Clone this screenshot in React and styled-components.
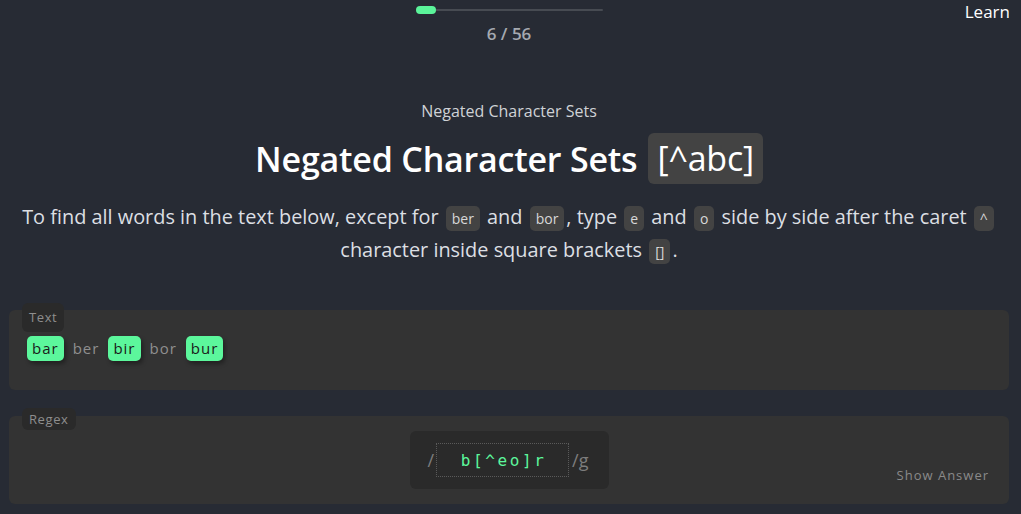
import React from 'react';
import styled, { createGlobalStyle } from 'styled-components';

const GlobalStyle = createGlobalStyle`
  html, body {
    margin: 0;
    padding: 0;
    background: #272b34;
    font-family: "Open Sans", "Noto Sans", sans-serif;
    color: #e6e6e6;
  }
`;

const Page = styled.div`
  width: 1000px;
  margin-left: 9px;
  height: 514px;
  overflow: hidden;
`;

const Header = styled.header`
  position: relative;
  display: flex;
  flex-direction: column;
  align-items: center;
  padding-top: 7px;
`;

const Track = styled.div`
  width: 187px;
  height: 2px;
  background: #474b52;
  border-radius: 2px;
  position: relative;
  margin-top: 2px;
`;

const Fill = styled.div`
  position: absolute;
  left: 0;
  top: -3px;
  height: 8px;
  border-radius: 4px;
  background: #5bf49a;
`;

const Counter = styled.div`
  margin-top: 11px;
  font-size: 17px;
  font-weight: 600;
  color: #a5a9b0;
`;

const LearnLink = styled.a`
  position: absolute;
  right: -1px;
  top: 0;
  font-size: 17px;
  color: #ffffff;
  text-decoration: none;
`;

const Intro = styled.section`
  display: flex;
  flex-direction: column;
  align-items: center;
  text-align: center;
  margin-top: 55px;
`;

const Subtitle = styled.div`
  font-size: 16px;
  color: #cfd2d6;
`;

const Title = styled.h1`
  margin: 11px 0 0;
  font-size: 34px;
  font-weight: 600;
  color: #ffffff;
  display: flex;
  align-items: center;
  gap: 11px;
  letter-spacing: -0.2px;
`;

const TitleCode = styled.span`
  background: #434343;
  border-radius: 6px;
  padding: 0 9px;
  font-weight: 400;
  line-height: 51px;
`;

const Description = styled.p`
  margin: 17px 0 0;
  font-size: 19.9px;
  line-height: 31px;
  color: #dcdfe3;
  max-width: 1000px;
`;

const Code = styled.code`
  font-family: "Open Sans", sans-serif;
  font-size: 14px;
  background: #434343;
  color: #d8d8d8;
  border-radius: 5px;
  padding: 3px 6px;
  margin: 0 2px;
`;

const Panel = styled.section`
  position: relative;
  background: #333333;
  border-radius: 6px;
  margin-top: ${p => p.$gap}px;
  height: ${p => p.$height}px;
  box-sizing: border-box;
  padding: ${p => p.$pad};
`;

const PanelLabel = styled.span`
  position: absolute;
  left: 13px;
  top: ${p => p.$top}px;
  height: ${p => p.$height}px;
  box-sizing: border-box;
  background: #2a2a2a;
  color: #8e8e8e;
  font-size: 13px;
  line-height: 18px;
  letter-spacing: 0.6px;
  padding: ${p => p.$padTop}px 7px 0;
  border-radius: 6px;
`;

const Words = styled.div`
  display: flex;
  align-items: center;
  gap: 8px;
  font-size: 15px;
  letter-spacing: 1px;
`;

const Word = styled.span`
  padding: ${p => (p.$match ? '2px 5px 3px' : '2px 1px 3px')};
  border-radius: 5px;
  color: ${p => (p.$match ? '#1a1a1a' : '#8f8f8f')};
  background: ${p => (p.$match ? '#5cf79c' : 'transparent')};
  box-shadow: ${p => (p.$match ? '2px 3px 4px rgba(0,0,0,0.35)' : 'none')};
`;

const RegexBox = styled.div`
  width: 199px;
  height: 58px;
  margin: 0 auto;
  background: #2a2a2a;
  border-radius: 6px;
  display: flex;
  align-items: center;
  box-sizing: border-box;
  padding: 0 14px 0 18px;
  font-size: 18px;
  color: #7d7d7d;
`;

const RegexInput = styled.div`
  width: 133px;
  height: 34px;
  border: 1px dotted #5a5a5a;
  margin: 0 3px 0 2px;
  box-sizing: border-box;
  display: flex;
  align-items: center;
  justify-content: center;
  font-family: "DejaVu Sans Mono", monospace;
  font-size: 16px;
  letter-spacing: 2.6px;
  color: #5cf79c;
  padding-left: 2px;
`;

const ShowAnswer = styled.button`
  position: absolute;
  right: 20px;
  bottom: 20px;
  background: none;
  border: none;
  padding: 0;
  font-family: "Open Sans", sans-serif;
  font-size: 13px;
  letter-spacing: 1px;
  color: #8a8a8a;
  cursor: pointer;
`;

const words = [
  { text: 'bar', match: true },
  { text: 'ber', match: false },
  { text: 'bir', match: true },
  { text: 'bor', match: false },
  { text: 'bur', match: true },
];

export default function App() {
  const step = 6;
  const total = 56;
  return (
    <Page>
      <GlobalStyle />
      <Header>
        <Track>
          <Fill style={{ width: `${Math.max(20, (step / total) * 187)}px` }} />
        </Track>
        <Counter>{step} / {total}</Counter>
        <LearnLink href="#">Learn</LearnLink>
      </Header>

      <Intro>
        <Subtitle>Negated Character Sets</Subtitle>
        <Title>
          Negated Character Sets <TitleCode>[^abc]</TitleCode>
        </Title>
        <Description>
          To find all words in the text below, except for <Code>ber</Code> and{' '}
          <Code>bor</Code>, type <Code>e</Code> and <Code>o</Code> side by side
          after the caret <Code>^</Code> character inside square brackets{' '}
          <Code>[]</Code>.
        </Description>
      </Intro>

      <Panel $gap={43} $height={80} $pad="26px 18px 0">
        <PanelLabel $top={-7} $height={29} $padTop={5}>Text</PanelLabel>
        <Words>
          {words.map(w => (
            <Word key={w.text} $match={w.match}>{w.text}</Word>
          ))}
        </Words>
      </Panel>

      <Panel $gap={26} $height={88} $pad="15px 0 0">
        <PanelLabel $top={-8} $height={22} $padTop={2}>Regex</PanelLabel>
        <RegexBox>
          /
          <RegexInput>b[^eo]r</RegexInput>
          /g
        </RegexBox>
        <ShowAnswer>Show Answer</ShowAnswer>
      </Panel>
    </Page>
  );
}
